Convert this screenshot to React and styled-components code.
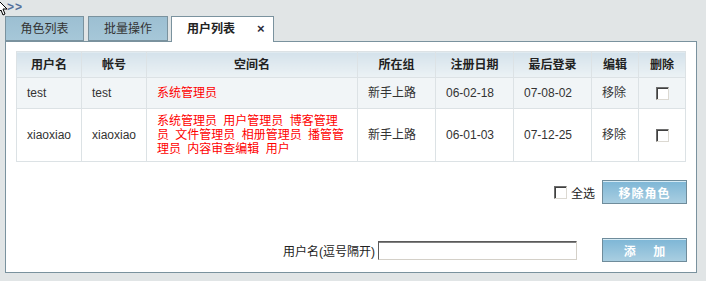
import styled, { createGlobalStyle } from "styled-components";

const GlobalStyle = createGlobalStyle`
  html, body {
    margin: 0;
    padding: 0;
    background: #e1e5e6;
  }
  body {
    font-family: "Liberation Sans", "Noto Sans CJK SC", sans-serif;
    font-size: 12px;
    color: #333;
  }
`;

const users = [
  {
    name: "test",
    account: "test",
    spaces: "系统管理员",
    group: "新手上路",
    reg: "06-02-18",
    last: "07-08-02",
    tall: false,
  },
  {
    name: "xiaoxiao",
    account: "xiaoxiao",
    spaces: "系统管理员 用户管理员 博客管理员 文件管理员 相册管理员 播管管理员 内容审查编辑 用户",
    group: "新手上路",
    reg: "06-01-03",
    last: "07-12-25",
    tall: true,
  },
];

const columns = [
  { label: "用户名", width: 65 },
  { label: "帐号", width: 65 },
  { label: "空间名", width: 211 },
  { label: "所在组", width: 78 },
  { label: "注册日期", width: 78 },
  { label: "最后登录", width: 78 },
  { label: "编辑", width: 47 },
  { label: "删除", width: 47 },
];

const App = () => {
  return (
    <Page>
      <GlobalStyle />
      <TopBar>
        <svg width="7" height="17" viewBox="0 0 7 17">
          <path d="M-2 0 L7 9 L3 9 L5 14 L3 15 L1 10 L-2 13 Z" fill="#fff" stroke="#000" strokeWidth="1" />
        </svg>
        <Crumb>&gt;&gt;</Crumb>
      </TopBar>

      <Tabs>
        <Tab $width={79}>角色列表</Tab>
        <Tab $width={80} $gap={4}>批量操作</Tab>
        <Tab $width={103} $gap={3} $active>
          用户列表
          <Close>×</Close>
        </Tab>
      </Tabs>

      <Panel>
        <Table>
          <colgroup>
            {columns.map((c) => (
              <col key={c.label} style={{ width: c.width }} />
            ))}
          </colgroup>
          <thead>
            <tr>
              {columns.map((c) => (
                <Th key={c.label}>{c.label}</Th>
              ))}
            </tr>
          </thead>
          <tbody>
            {users.map((u, i) => (
              <Row key={u.name} $shaded={i === 0} $tall={u.tall}>
                <Td>{u.name}</Td>
                <Td>{u.account}</Td>
                <SpaceTd>{u.spaces}</SpaceTd>
                <Td>{u.group}</Td>
                <Td>{u.reg}</Td>
                <Td>{u.last}</Td>
                <Td>移除</Td>
                <CenterTd>
                  <Check type="checkbox" />
                </CenterTd>
              </Row>
            ))}
          </tbody>
        </Table>

        <ActionRow>
          <SelectAll>
            <Check type="checkbox" />
            全选
          </SelectAll>
          <BlueButton>移除角色</BlueButton>
        </ActionRow>

        <AddRow>
          <FieldLabel>用户名(逗号隔开)</FieldLabel>
          <TextInput type="text" />
          <BlueButton $wide>添 加</BlueButton>
        </AddRow>
      </Panel>
    </Page>
  );
};

const Page = styled.div`
  width: 706px;
  height: 281px;
  overflow: hidden;
`;

const TopBar = styled.div`
  height: 16px;
  display: flex;
  align-items: flex-start;
  box-sizing: border-box;
`;

const Crumb = styled.span`
  font-family: "Liberation Sans", sans-serif;
  font-size: 12px;
  line-height: 14px;
  font-weight: bold;
  color: #52709a;
  letter-spacing: 1px;
  margin-top: 0;
`;

const Tabs = styled.div`
  display: flex;
  align-items: flex-end;
  height: 25px;
  padding-left: 5px;
  position: relative;
  z-index: 1;
`;

const Tab = styled.div`
  box-sizing: border-box;
  width: ${(p) => p.$width}px;
  margin-left: ${(p) => p.$gap || 0}px;
  height: ${(p) => (p.$active ? 26 : 25)}px;
  margin-bottom: ${(p) => (p.$active ? -1 : 0)}px;
  border: 1px solid #7a929e;
  border-bottom: ${(p) => (p.$active ? "none" : "1px solid #7a929e")};
  background: ${(p) =>
    p.$active ? "#fff" : "linear-gradient(#9cbfd2, #a6c7d8)"};
  display: flex;
  align-items: center;
  justify-content: ${(p) => (p.$active ? "flex-start" : "center")};
  padding: ${(p) => (p.$active ? "0 0 1px 15px" : "0")};
  font-size: 12px;
  line-height: 14px;
  font-weight: ${(p) => (p.$active ? "bold" : "normal")};
  color: ${(p) => (p.$active ? "#222" : "#333")};
`;

const Close = styled.span`
  margin-left: 22px;
  font-size: 13px;
  font-weight: bold;
  color: #2a2a3a;
`;

const Panel = styled.div`
  box-sizing: border-box;
  margin-left: 5px;
  width: 692px;
  height: 232px;
  border: 1px solid #7a929e;
  background: #fff;
  padding: 9px 9px 9px 10px;
`;

const Table = styled.table`
  width: 670px;
  table-layout: fixed;
  border-collapse: collapse;
  border: 1px solid #dce2e5;
`;

const Th = styled.th`
  height: 25px;
  padding: 0;
  border: 1px solid #dce2e5;
  background: linear-gradient(#d4e2eb, #ecf2f5);
  font-weight: bold;
  font-size: 12px;
  color: #222;
  text-align: center;
  line-height: 14px;
`;

const Row = styled.tr`
  background: ${(p) => (p.$shaded ? "#f1f5f7" : "#fff")};
  height: ${(p) => (p.$tall ? 53 : 31)}px;
`;

const Td = styled.td`
  border: 1px solid #dce2e5;
  padding: 0 10px;
  font-size: 12px;
  line-height: 14px;
  color: #333;
  text-align: left;
  vertical-align: middle;
`;

const SpaceTd = styled(Td)`
  color: #ff0000;
  word-spacing: 3px;
  padding: 5px 10px;
`;

const CenterTd = styled(Td)`
  text-align: center;
  padding: 0;
`;

const Check = styled.input`
  appearance: none;
  box-sizing: border-box;
  width: 13px;
  height: 13px;
  margin: 0;
  vertical-align: middle;
  background: #fff;
  border: 1px solid;
  border-color: #6e6e6e #dcd9d2 #dcd9d2 #6e6e6e;
  box-shadow: inset 1px 1px 0 #404040;
`;

const ActionRow = styled.div`
  display: flex;
  justify-content: flex-end;
  align-items: center;
  margin-top: 18px;
  height: 24px;
`;

const SelectAll = styled.label`
  display: flex;
  align-items: center;
  gap: 4px;
  margin-right: 7px;
  font-size: 12px;
  color: #222;
`;

const BlueButton = styled.button`
  box-sizing: border-box;
  width: 85px;
  height: 24px;
  margin: 0;
  padding: 0;
  border: 1px solid #6f8c9b;
  background: linear-gradient(#7db6d6, #a9cee1);
  box-shadow: inset 0 1px 0 #d6ebf5;
  color: #fff;
  font-family: "Liberation Sans", "Noto Sans CJK SC", sans-serif;
  font-size: 12px;
  font-weight: bold;
  letter-spacing: ${(p) => (p.$wide ? "0" : "1px")};
  word-spacing: ${(p) => (p.$wide ? "14px" : "0")};
`;

const AddRow = styled.div`
  display: flex;
  justify-content: flex-end;
  align-items: center;
  margin-top: 34px;
  height: 24px;
`;

const FieldLabel = styled.span`
  font-size: 12px;
  color: #222;
  margin-right: 3px;
`;

const TextInput = styled.input`
  box-sizing: border-box;
  width: 199px;
  height: 19px;
  margin: 0 25px 0 0;
  padding: 0 2px;
  background: #fff;
  border: 1px solid;
  border-color: #5a5a5a #d4d0c8 #d4d0c8 #5a5a5a;
  box-shadow: inset 0 1px 0 #808080;
  outline: none;
`;

export default App;
